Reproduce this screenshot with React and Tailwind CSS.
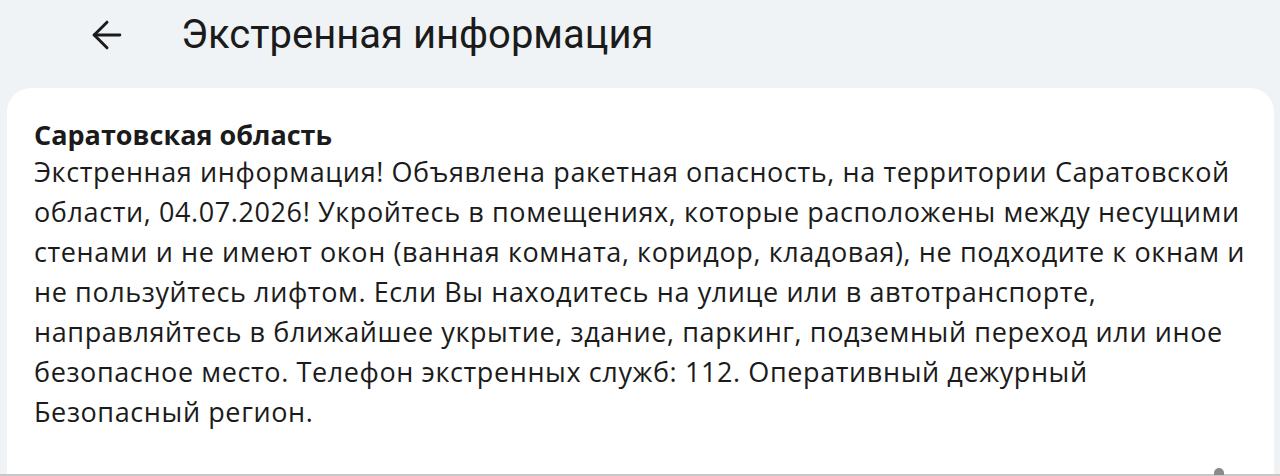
import { ArrowLeft } from 'lucide-react';

const lines = [
  'Экстренная информация! Объявлена ракетная опасность, на территории Саратовской',
  'области, 04.07.2026! Укройтесь в помещениях, которые расположены между несущими',
  'стенами и не имеют окон (ванная комната, коридор, кладовая), не подходите к окнам и',
  'не пользуйтесь лифтом. Если Вы находитесь на улице или в автотранспорте,',
  'направляйтесь в ближайшее укрытие, здание, паркинг, подземный переход или иное',
  'безопасное место. Телефон экстренных служб: 112. Оперативный дежурный',
  'Безопасный регион.',
];

export default function App() {
  return (
    <div className="w-[1280px] h-[476px] overflow-hidden bg-[#f0f3f6] flex flex-col">
      {/* top bar */}
      <div className="h-[88px] flex items-start pt-[10px] shrink-0">
        <button className="ml-[85px] mt-[3px] w-[44px] h-[44px] flex items-center justify-center text-[#1b1b1b]">
          <ArrowLeft size={44} strokeWidth={1.6} />
        </button>
        <h1 className="ml-[52px] text-[40px] leading-[50px] text-[#1b1b1b] font-['Roboto',sans-serif]">
          Экстренная информация
        </h1>
      </div>

      {/* message card */}
      <div className="relative mx-[7px] mr-[6px] flex-1 bg-white rounded-t-[24px] px-[27px] pt-[30px] font-['Open_Sans','Noto_Sans',sans-serif] text-[#1b1b1b]">
        <div className="text-[27px] leading-[34px] font-bold">Саратовская область</div>
        <div className="text-[27px] leading-[40px] tracking-[0.6px]">
          {lines.map((l) => (
            <div key={l} className="whitespace-nowrap">{l}</div>
          ))}
        </div>
        <div className="absolute bottom-0 left-[-7px] right-[-6px] h-[2px] bg-[#c8c8c8]" />
        <div className="absolute bottom-[1px] left-[1207px] w-[10px] h-[7px] rounded-t-full bg-[#8a8a8a]" />
      </div>
    </div>
  );
}
